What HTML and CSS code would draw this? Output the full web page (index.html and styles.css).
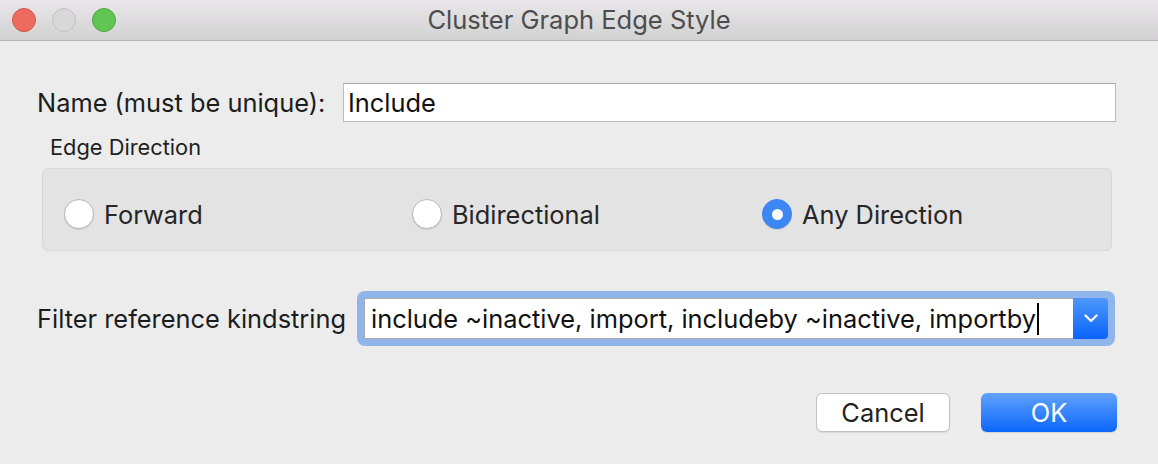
FILE: index.html
```html
<!DOCTYPE html>
<html>
<head>
<meta charset="utf-8">
<link rel="stylesheet" href="styles.css">
</head>
<body>
<div class="window">
  <div class="titlebar">
    <div class="lights">
      <span class="light red"></span>
      <span class="light grey"></span>
      <span class="light green"></span>
    </div>
    <div class="title">Cluster Graph Edge Style</div>
  </div>
  <div class="content">
    <div class="row name-row">
      <label class="label">Name (must be unique):</label>
      <div class="textfield">Include</div>
    </div>
    <div class="section-label">Edge Direction</div>
    <div class="group">
      <div class="radio"><span class="circle"></span><span class="rtext">Forward</span></div>
      <div class="radio"><span class="circle"></span><span class="rtext">Bidirectional</span></div>
      <div class="radio"><span class="circle on"></span><span class="rtext">Any Direction</span></div>
    </div>
    <div class="row filter-row">
      <label class="label">Filter reference kindstring</label>
      <div class="ring">
        <div class="combo">
          <div class="combo-text">include ~inactive, import, includeby ~inactive, importby<span class="caret"></span></div>
          <div class="combo-btn">
            <svg width="14" height="9" viewBox="0 0 14 9"><path d="M1.5 1.5 L7 7 L12.5 1.5" fill="none" stroke="#fff" stroke-width="2.2" stroke-linecap="round" stroke-linejoin="round"/></svg>
          </div>
        </div>
      </div>
    </div>
    <div class="buttons">
      <div class="btn cancel">Cancel</div>
      <div class="btn ok">OK</div>
    </div>
  </div>
</div>
</body>
</html>
```
FILE: styles.css
```css
html, body {
  margin: 0;
  padding: 0;
}
body {
  width: 1158px;
  height: 464px;
  background: #ececec;
  font-family: Inter, "Liberation Sans", sans-serif;
  color: #1f1f1f;
  overflow: hidden;
}
.window {
  display: flex;
  flex-direction: column;
  height: 464px;
}
.titlebar {
  height: 40px;
  border-bottom: 1px solid #b3b3b3;
  background: linear-gradient(#e9e7e9, #d2d1d2);
  display: flex;
  align-items: center;
  position: relative;
}
.lights {
  display: flex;
  gap: 16px;
  padding-left: 12px;
}
.light {
  width: 24px;
  height: 24px;
  border-radius: 50%;
  box-sizing: border-box;
}
.red { background: #ec6a5e; border: 1px solid #d5544a; }
.grey { background: #d9d8d9; border: 1px solid #c2c1c2; }
.green { background: #61c554; border: 1px solid #4ea643; }
.title {
  position: absolute;
  left: 0;
  right: 0;
  top: 0;
  height: 40px;
  line-height: 40px;
  text-align: center;
  font-size: 25.5px;
  color: #4d4d4d;
  pointer-events: none;
}
.content {
  padding: 0 42px 0 37px;
  display: flex;
  flex-direction: column;
}
.row {
  display: flex;
  align-items: center;
}
.label {
  font-size: 25.4px;
  color: #1c1c1c;
  white-space: nowrap;
}
.name-row {
  margin-top: 42px;
}
.name-row .label {
  width: 306px;
}
.textfield {
  flex: 1;
  height: 39px;
  box-sizing: border-box;
  background: #fff;
  border: 1px solid #bdbdbd;
  border-top-color: #a8a8a8;
  font-size: 25.4px;
  line-height: 37px;
  padding-left: 4px;
  color: #111;
}
.section-label {
  margin-top: 12px;
  margin-left: 13px;
  font-size: 21.8px;
  line-height: 27px;
  color: #1f1f1f;
}
.group {
  margin-top: 7px;
  margin-left: 5px;
  margin-right: 4px;
  height: 83px;
  box-sizing: border-box;
  background: #e3e3e3;
  border: 1px solid #d8d8d8;
  border-radius: 6px;
  display: grid;
  grid-template-columns: 348px 350px 1fr;
  align-items: center;
  padding: 9px 0 0 21px;
}
.radio {
  display: flex;
  align-items: center;
  gap: 10px;
}
.circle {
  width: 30px;
  height: 30px;
  border-radius: 50%;
  box-sizing: border-box;
  background: #fff;
  border: 1px solid #b9b9b9;
  box-shadow: 0 1px 1px rgba(0,0,0,0.12);
  position: relative;
}
.circle.on {
  background: #3d87f5;
  border-color: #3a82ef;
}
.circle.on::after {
  content: "";
  position: absolute;
  width: 11px;
  height: 11px;
  border-radius: 50%;
  background: #fff;
  left: 8.5px;
  top: 8.5px;
}
.rtext {
  font-size: 25.4px;
  color: #262626;
}
.filter-row {
  margin-top: 40px;
}
.filter-row .label {
  width: 320px;
}
.ring {
  flex: 1;
  margin-right: 1px;
  background: #8fb5ea;
  border-radius: 8px;
  padding: 7px;
}
.combo {
  display: flex;
  height: 41px;
  background: #fff;
  box-shadow: 0 0 0 1px #a9a9a9 inset;
}
.combo-text {
  flex: 1;
  font-size: 25.4px;
  line-height: 40px;
  padding-left: 7px;
  color: #111;
  display: flex;
  align-items: center;
  white-space: nowrap;
}
.caret {
  display: inline-block;
  width: 2px;
  height: 32px;
  background: #000;
  margin-left: 1px;
}
.combo-btn {
  width: 35px;
  background: linear-gradient(#4d97fb, #0a64fb);
  border-radius: 0 4px 4px 0;
  display: flex;
  align-items: center;
  justify-content: center;
}
.buttons {
  margin-top: 47px;
  display: flex;
  justify-content: flex-end;
  gap: 31px;
  margin-right: -1px;
}
.btn {
  height: 39px;
  box-sizing: border-box;
  border-radius: 6px;
  font-size: 25.4px;
  display: flex;
  align-items: center;
  justify-content: center;
}
.cancel {
  width: 134px;
  background: #fff;
  border: 1px solid #c3c3c3;
  box-shadow: 0 1px 1px rgba(0,0,0,0.08);
  color: #222;
}
.ok {
  width: 136px;
  background: linear-gradient(#62a3fc, #0a66fb);
  color: #fff;
  box-shadow: 0 1px 1px rgba(0,0,0,0.12);
}
```
